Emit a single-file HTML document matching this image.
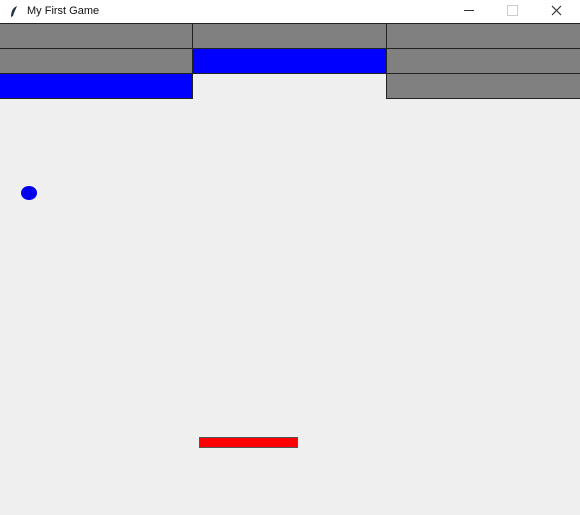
<!DOCTYPE html><html><head><style>
body{margin:0;width:580px;height:515px;background:#efefef;position:relative;overflow:hidden;font-family:"Liberation Sans",sans-serif}
.t{position:absolute;left:0;top:0;width:580px;height:23px;background:#fff}
.b{position:absolute;box-sizing:border-box;border:1px solid #222}
.g{background:#808080}.u{background:#0000ff}
</style></head><body>
<div class="t">
<svg style="position:absolute;left:9px;top:5px" width="10" height="13"><path d="M8 1 C3 3 2 8 2 12 L4 11 C5 7 7 4 8 1Z" fill="#234"/></svg>
<span style="position:absolute;left:27px;top:5px;font-size:11px;color:#111">My First Game</span>
<div style="position:absolute;left:464px;top:10px;width:10px;height:1px;background:#333"></div>
<div style="position:absolute;left:507px;top:5px;width:9px;height:9px;border:1px solid #ccc"></div>
<svg style="position:absolute;left:551px;top:5px" width="11" height="11"><path d="M1 1L10 10M10 1L1 10" stroke="#333" stroke-width="1.2"/></svg>
</div>
<div class="b g" style="left:-1px;top:23px;width:194px;height:26px"></div>
<div class="b g" style="left:192px;top:23px;width:195px;height:26px"></div>
<div class="b g" style="left:386px;top:23px;width:195px;height:26px"></div>
<div class="b g" style="left:-1px;top:48px;width:194px;height:26px"></div>
<div class="b u" style="left:192px;top:48px;width:195px;height:26px"></div>
<div class="b g" style="left:386px;top:48px;width:195px;height:26px"></div>
<div class="b u" style="left:-1px;top:73px;width:194px;height:26px"></div>
<div class="b g" style="left:386px;top:73px;width:195px;height:26px"></div>
<div style="position:absolute;left:21px;top:186px;width:16px;height:14px;border-radius:50%;background:#0000ee"></div>
<div class="b" style="left:199px;top:437px;width:99px;height:11px;background:#f00;border-color:#555"></div>
</body></html>
